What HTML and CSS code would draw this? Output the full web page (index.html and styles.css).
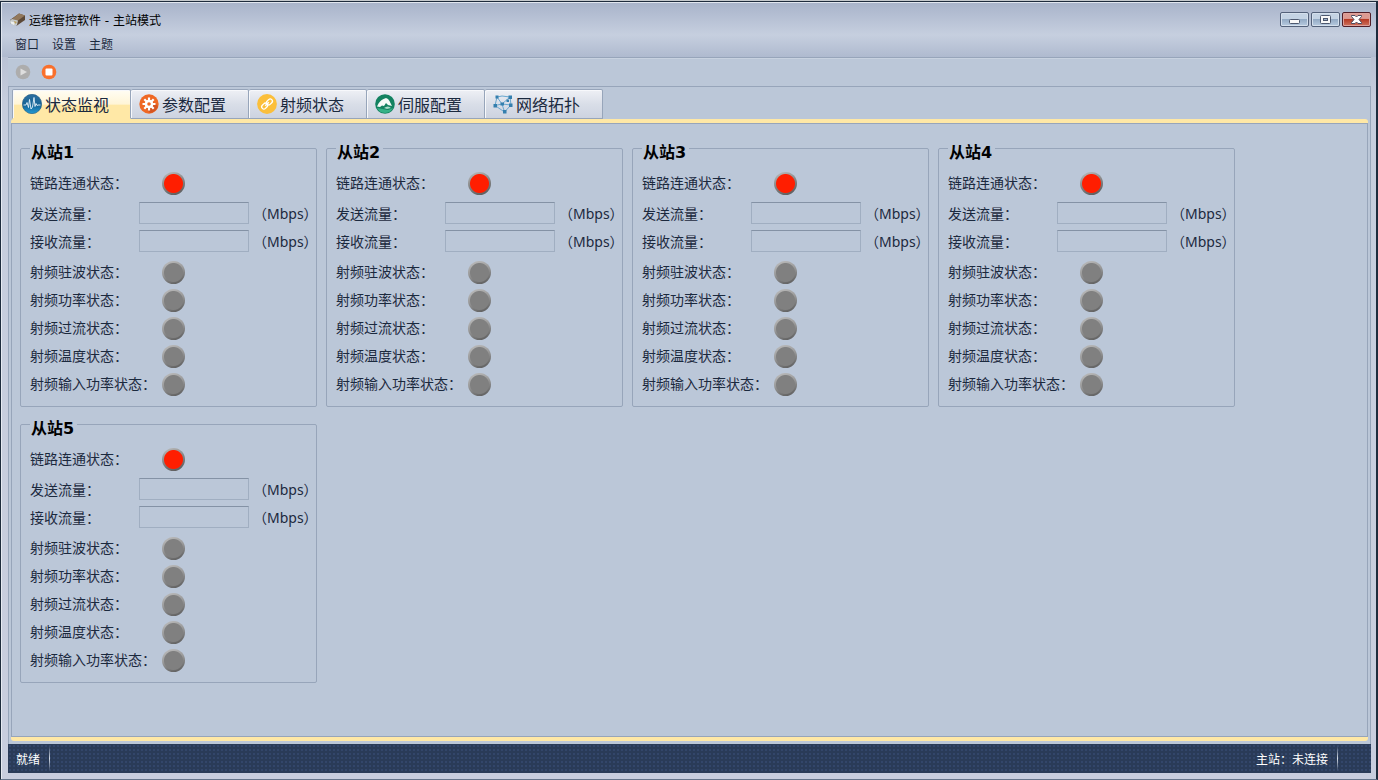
FILE: index.html
```html
<!DOCTYPE html>
<html lang="zh-CN">
<head>
<meta charset="utf-8">
<title>运维管控软件 - 主站模式</title>
<link rel="stylesheet" href="styles.css">
</head>
<body>
<div class="window">
  <header class="chrome">
    <div class="titlebar">
      <svg class="app-icon" viewBox="0 0 17 15" aria-hidden="true"><path d="M1 8 10 1.500 16 3.500 16 8 8 13.500 1 11z" fill="#5c4937"/><path d="M3 7 10 1.500 16 3.500 9 8.500z" fill="#92785c"/><path d="M1 8.500 3 7 9 8.500 8 13 5 13.500 1 11z" fill="#c5c9c9"/><path d="M2 9.500 6 10.500 5 13 2 11.500z" fill="#edf0ef"/><path d="M5 9 8 10 6 12z" fill="#bb9d58"/></svg>
      <h1 class="title">运维管控软件 - 主站模式</h1>
      <div class="window-buttons">
        <button class="win-button" type="button" aria-label="最小化"><svg viewBox="0 0 29 15"><rect x="9.500" y="7.500" width="10" height="4" rx="1" fill="#f8f8f8" stroke="#4d586f"/></svg></button>
        <button class="win-button" type="button" aria-label="最大化"><svg viewBox="0 0 29 15"><rect x="9.500" y="3.500" width="10" height="8" rx="1" fill="#f8f8f8" stroke="#4d586f"/><rect x="12.500" y="6.500" width="4" height="2" fill="#9bb0c9" stroke="#4d586f"/></svg></button>
        <button class="win-button close" type="button" aria-label="关闭"><svg viewBox="0 0 29 15"><path d="M9.500 3.500H13L14.500 5 16 3.500H19.500V4.500L17 7.500 19.500 10.500V11.500H16L14.500 10 13 11.500H9.500V10.500L12 7.500 9.500 4.500z" fill="#fff" stroke="#4d4c60"/></svg></button>
      </div>
    </div>
    <nav class="menubar" aria-label="菜单">
      <button type="button">窗口</button>
      <button type="button">设置</button>
      <button type="button">主题</button>
    </nav>
  </header>
  <div class="toolbar">
    <button type="button" aria-label="启动" disabled><svg viewBox="0 0 16 16"><circle cx="8" cy="8" r="7.300" fill="#adadad"/><path d="M5.500 4.500 12 8 5.500 11.500z" fill="#dedede"/></svg></button>
    <button type="button" aria-label="停止"><svg viewBox="0 0 16 16"><circle cx="8" cy="8" r="7.300" fill="#f9702c"/><rect x="4.500" y="4.500" width="7" height="7" rx="1" fill="#fff"/></svg></button>
  </div>
  <main class="client">
    <div class="tabs" role="tablist">
      <button class="tab active" type="button" role="tab" aria-selected="true" aria-controls="monitor">
        <svg viewBox="0 0 20 20"><defs><linearGradient id="blue" x2="0" y2="1"><stop stop-color="#2e6f9f"/><stop offset=".55" stop-color="#156496"/><stop offset="1" stop-color="#249bd4"/></linearGradient></defs><circle cx="10" cy="10" r="9.700" fill="url(#blue)" stroke="#17547f" stroke-width=".6"/><path d="M1.500 11H4L5 8.500 6.500 13.500 7.500 5.500 9 15 10.500 13 12 3.500 13 12.500 14 9.500 15 11.500 16 11H18.500" fill="none" stroke="#e8f4fb" stroke-width=".9"/></svg>状态监视</button>
      <button class="tab" type="button" role="tab" aria-selected="false">
        <svg viewBox="0 0 20 20"><circle cx="10" cy="10" r="9.700" fill="#ef6824"/><path d="M14 8 19 12A10 10 0 0 1 11 19L7 14z" fill="#d45522"/><circle cx="10" cy="10" r="4.300" fill="#fff"/><path d="M10 3.500V16.500M3.500 10H16.500M5.300 5.300 14.700 14.700M14.700 5.300 5.300 14.700" stroke="#fff" stroke-width="2.200"/><circle cx="10" cy="10" r="1.800" fill="#ef6824"/></svg>参数配置</button>
      <button class="tab" type="button" role="tab" aria-selected="false">
        <svg viewBox="0 0 20 20"><circle cx="10" cy="10" r="9.900" fill="#fbbf3b"/><g fill="none" stroke="#fff" stroke-width="1.300"><rect x="9.300" y="5.700" width="6.400" height="4.400" rx="2.200" transform="rotate(-45 12.500 7.900)"/><rect x="4.400" y="9.900" width="6.400" height="4.400" rx="2.200" transform="rotate(-45 7.600 12.100)"/><path d="M8.200 11.800 11.800 8.200"/></g></svg>射频状态</button>
      <button class="tab" type="button" role="tab" aria-selected="false">
        <svg viewBox="0 0 20 20"><circle cx="10" cy="10" r="9.800" fill="#138260"/><path d="M2 14A9 9 0 0 0 18 14L13 16z" fill="#35b287"/><path d="M2 12.500C4 8 6 6 8.500 5L11 4 13 5 14.500 7 17 12 13 11 11 9 9 12 7 11.500 5 13z" fill="#f4faf7"/><path d="M9 14Q13 11 16 14L12 15z" fill="#a6dcc8"/></svg>伺服配置</button>
      <button class="tab" type="button" role="tab" aria-selected="false">
        <svg viewBox="0 0 20 20"><path d="M4 3 9 2 17 3 18 11 11.500 18 2 11.500 4 3 9 10 17 3M2 11.500 9 10 18 11M9 10 11.500 18" fill="none" stroke="#69a7cf"/><g fill="#347fae"><rect x="2.500" y="1.500" width="3" height="3"/><rect x="15.500" y="1.500" width="3.500" height="3.500"/><rect x="13.500" y="5.500" width="2.500" height="2.500"/><rect x="7.500" y="8.500" width="3.500" height="3"/><rect x=".5" y="10" width="3.500" height="3.500"/><rect x="16" y="9.500" width="3.500" height="3.500"/><rect x="10" y="16" width="3.500" height="3.500"/></g></svg>网络拓扑</button>
    </div>
    <div class="page" id="monitor" role="tabpanel" aria-label="状态监视">
      <fieldset class="station">
        <legend>从站1</legend>
        <div class="row link"><span class="name">链路连通状态：</span><span class="led red"></span></div>
        <div class="row"><label for="tx1">发送流量：</label><input id="tx1" readonly><span class="unit">（Mbps）</span></div>
        <div class="row"><label for="rx1">接收流量：</label><input id="rx1" readonly><span class="unit">（Mbps）</span></div>
        <div class="radio">
          <div class="row"><span class="name">射频驻波状态：</span><span class="led"></span></div>
          <div class="row"><span class="name">射频功率状态：</span><span class="led"></span></div>
          <div class="row"><span class="name">射频过流状态：</span><span class="led"></span></div>
          <div class="row"><span class="name">射频温度状态：</span><span class="led"></span></div>
          <div class="row"><span class="name">射频输入功率状态：</span><span class="led"></span></div>
        </div>
      </fieldset>
      <fieldset class="station">
        <legend>从站2</legend>
        <div class="row link"><span class="name">链路连通状态：</span><span class="led red"></span></div>
        <div class="row"><label for="tx2">发送流量：</label><input id="tx2" readonly><span class="unit">（Mbps）</span></div>
        <div class="row"><label for="rx2">接收流量：</label><input id="rx2" readonly><span class="unit">（Mbps）</span></div>
        <div class="radio">
          <div class="row"><span class="name">射频驻波状态：</span><span class="led"></span></div>
          <div class="row"><span class="name">射频功率状态：</span><span class="led"></span></div>
          <div class="row"><span class="name">射频过流状态：</span><span class="led"></span></div>
          <div class="row"><span class="name">射频温度状态：</span><span class="led"></span></div>
          <div class="row"><span class="name">射频输入功率状态：</span><span class="led"></span></div>
        </div>
      </fieldset>
      <fieldset class="station">
        <legend>从站3</legend>
        <div class="row link"><span class="name">链路连通状态：</span><span class="led red"></span></div>
        <div class="row"><label for="tx3">发送流量：</label><input id="tx3" readonly><span class="unit">（Mbps）</span></div>
        <div class="row"><label for="rx3">接收流量：</label><input id="rx3" readonly><span class="unit">（Mbps）</span></div>
        <div class="radio">
          <div class="row"><span class="name">射频驻波状态：</span><span class="led"></span></div>
          <div class="row"><span class="name">射频功率状态：</span><span class="led"></span></div>
          <div class="row"><span class="name">射频过流状态：</span><span class="led"></span></div>
          <div class="row"><span class="name">射频温度状态：</span><span class="led"></span></div>
          <div class="row"><span class="name">射频输入功率状态：</span><span class="led"></span></div>
        </div>
      </fieldset>
      <fieldset class="station">
        <legend>从站4</legend>
        <div class="row link"><span class="name">链路连通状态：</span><span class="led red"></span></div>
        <div class="row"><label for="tx4">发送流量：</label><input id="tx4" readonly><span class="unit">（Mbps）</span></div>
        <div class="row"><label for="rx4">接收流量：</label><input id="rx4" readonly><span class="unit">（Mbps）</span></div>
        <div class="radio">
          <div class="row"><span class="name">射频驻波状态：</span><span class="led"></span></div>
          <div class="row"><span class="name">射频功率状态：</span><span class="led"></span></div>
          <div class="row"><span class="name">射频过流状态：</span><span class="led"></span></div>
          <div class="row"><span class="name">射频温度状态：</span><span class="led"></span></div>
          <div class="row"><span class="name">射频输入功率状态：</span><span class="led"></span></div>
        </div>
      </fieldset>
      <fieldset class="station">
        <legend>从站5</legend>
        <div class="row link"><span class="name">链路连通状态：</span><span class="led red"></span></div>
        <div class="row"><label for="tx5">发送流量：</label><input id="tx5" readonly><span class="unit">（Mbps）</span></div>
        <div class="row"><label for="rx5">接收流量：</label><input id="rx5" readonly><span class="unit">（Mbps）</span></div>
        <div class="radio">
          <div class="row"><span class="name">射频驻波状态：</span><span class="led"></span></div>
          <div class="row"><span class="name">射频功率状态：</span><span class="led"></span></div>
          <div class="row"><span class="name">射频过流状态：</span><span class="led"></span></div>
          <div class="row"><span class="name">射频温度状态：</span><span class="led"></span></div>
          <div class="row"><span class="name">射频输入功率状态：</span><span class="led"></span></div>
        </div>
      </fieldset>
    </div>
  </main>
  <footer class="statusbar">
    <span class="status">就绪</span>
    <span class="status">主站：未连接</span>
  </footer>
</div>
</body>
</html>
```
FILE: styles.css
```css
:root {
  --surface: #bbc7d8;
  --line: #97a5ba;
  --accent: #ffe8a6;
  --ink: #1b293e;
}

* { box-sizing: border-box; }

body {
  margin: 0;
  background: #c5c9cd;
  color: var(--ink);
  font-family: "Noto Sans", "Noto Sans CJK SC", sans-serif;
  font-size: 14px;
}

button, input { font: inherit; color: inherit; }
button { border: 0; padding: 0; background: none; }
svg { display: block; }

.window {
  display: flex;
  flex-direction: column;
  min-height: calc(100vh - 1px);
  margin-top: 1px;
  padding: 0 5px 6px 6px;
  border: 1px solid #1e2b3d;
  border-right-width: 2px;
  border-bottom-color: #65748b;
  background: linear-gradient(#a9b4ca 0, #c6cddd 100px, #c8cdde 100%);
  box-shadow: inset 1px 1px #e6eaf2;
}

.chrome {
  margin: 0 -5px 0 -6px;
  padding: 0 5px 0 6px;
  background: linear-gradient(#a8b3ca, #c6cfdf 60%, #afbacf);
  box-shadow: inset 1px 1px #e1e6ef;
  font-size: 12px;
  font-family: "DejaVu Sans", "Noto Sans CJK SC", sans-serif;
}

.titlebar {
  display: flex;
  align-items: center;
  height: 32px;
  padding: 2px 0 0 2px;
}
.app-icon { width: 17px; height: 15px; margin-right: 3px; }
.title {
  margin: 0;
  color: #000;
  font-size: 12px;
  font-weight: 400;
}

.window-buttons { display: flex; gap: 2px; margin-left: auto; }
.win-button {
  width: 29px;
  height: 15px;
  border: 1px solid #53617a;
  border-radius: 2px;
  background: linear-gradient(#c4d3e4 45%, #94abc5 50%, #b8cbe0);
  box-shadow: inset 0 0 0 1px #d4dfec;
}
.win-button svg { width: 29px; height: 15px; margin: -1px; }
.win-button.close {
  border-color: #511e28;
  background: linear-gradient(#dd9a92 42%, #b63923 48%, #ce735f);
  box-shadow: inset 0 0 0 1px #dea29c;
}

.menubar {
  display: flex;
  gap: 13px;
  height: 23px;
  padding: 0 8px 4px;
}

.toolbar {
  display: flex;
  align-items: center;
  gap: 10px;
  height: 29px;
  margin: 0 0 0 1px;
  padding-left: 7px;
  border-top: 1px solid var(--line);
  background: var(--surface);
  box-shadow: inset 0 1px #c8d2e0;
}
.toolbar svg { width: 16px; height: 16px; }

.client {
  display: flex;
  flex: 1;
  flex-direction: column;
  margin: 0 0 0 1px;
  padding: 2px 2px 3px;
  border: 1px solid var(--line);
  border-bottom: 0;
  background: var(--surface);
}

.tabs { display: flex; padding-left: 1px; }
.tab {
  display: flex;
  align-items: center;
  gap: 3px;
  width: 118px;
  height: 30px;
  padding: 0 0 1px 8px;
  border: 1px solid var(--line);
  border-left-width: 0;
  border-radius: 2px 2px 0 0;
  background: linear-gradient(#eef0f5, #d9dee8 50%, #cdd3e0);
  box-shadow: inset 1px 1px #f7f8fb;
  font-family: "Noto Sans CJK SC", sans-serif;
  font-size: 16px;
  line-height: 20px;
}
.tab svg { width: 20px; height: 20px; }
.tab.active {
  width: 119px;
  padding-left: 9px;
  border-left-width: 1px;
  border-bottom-color: var(--accent);
  background: linear-gradient(#fffdf4, #fff5d7 50%, var(--accent) 55%);
}

.page {
  display: grid;
  flex: 1;
  grid-template-columns: repeat(auto-fill, 297px);
  align-content: start;
  gap: 1px 9px;
  padding: 9px;
  border: 0 solid var(--accent);
  border-width: 4px 0;
  border-radius: 3px;
  box-shadow: inset 0 0 0 1px var(--line);
}

.station {
  min-width: 0;
  margin: 0;
  padding: 5px 0 8px 9px;
  border: 1px solid var(--line);
  border-radius: 2px;
}
.station legend {
  padding: 10px 3px 0 1px;
  color: #000;
  font-family: "DejaVu Sans", "Noto Sans CJK SC", sans-serif;
  font-size: 16px;
  font-weight: 700;
  line-height: 22px;
}

.row {
  display: flex;
  align-items: center;
  height: 28px;
  line-height: 20px;
  white-space: nowrap;
}
.row.link { margin-bottom: 2px; }
.radio { margin-top: 3px; }
.row label { flex: none; width: 109px; padding-top: 2px; }
.row .name { flex: none; width: 132px; }
.row input {
  flex: none;
  width: 110px;
  height: 22px;
  padding: 0 4px;
  border: 1px solid #a0aec1;
  border-top-color: #8492a5;
  border-radius: 0;
  background: transparent;
}
.unit { margin-left: 4px; padding-top: 2px; }

.led {
  width: 23px;
  height: 23px;
  border-radius: 50%;
  background:
    radial-gradient(circle, #808080 0 9px, transparent 10px),
    linear-gradient(160deg, #c0c0c0, #999 45%, #555);
}
.led.red {
  background:
    radial-gradient(circle, #ff1e00 0 9px, transparent 10px),
    linear-gradient(160deg, #c0c0c0, #888 45%, #555);
}

.statusbar {
  display: flex;
  justify-content: space-between;
  height: 29px;
  margin: 0 0 0 1px;
  padding: 0 33px 0 8px;
  background: radial-gradient(#33466a 1px, transparent 1px) 0 0 / 4px 4px, #2a3b58;
  color: #fff;
  font-family: "Noto Sans CJK SC", sans-serif;
  font-size: 12px;
}
.status {
  display: flex;
  align-items: center;
  padding-right: 9px;
  border-right: 1px solid;
  border-image: linear-gradient(transparent 10%, #d5dce6 50%, transparent 90%) 1;
}
```
